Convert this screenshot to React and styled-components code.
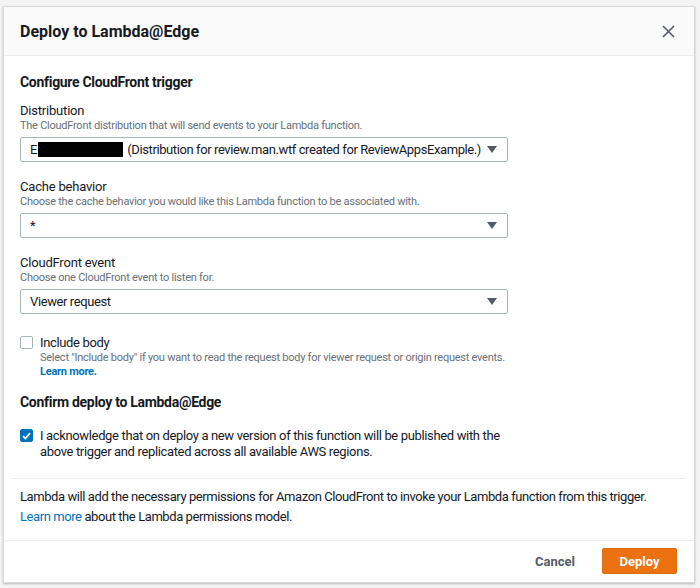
import React, { useState } from 'react';
import styled, { createGlobalStyle } from 'styled-components';

const GlobalStyle = createGlobalStyle`
  html, body {
    margin: 0;
    padding: 0;
    background: #f4f4f4;
    font-family: Roboto, "Liberation Sans", Arial, sans-serif;
    color: #16191f;
  }
`;

const Page = styled.div`
  width: 700px;
  height: 588px;
  padding: 6px 5px 0 3px;
  box-sizing: border-box;
`;

const Modal = styled.div`
  width: 692px;
  height: 577px;
  box-sizing: border-box;
  background: #fff;
  border: 1px solid #d5dbdb;
  box-shadow: 0 1px 2px rgba(0, 0, 0, 0.25);
  display: flex;
  flex-direction: column;
`;

const Header = styled.div`
  height: 48px;
  flex-shrink: 0;
  display: flex;
  align-items: center;
  justify-content: space-between;
  padding: 0 18px 0 16px;
  background: #fafafa;
  border-bottom: 1px solid #eaeded;
`;

const Title = styled.h2`
  margin: 0;
  font-size: 16px;
  font-weight: 700;
  color: #16191f;
`;

const CloseButton = styled.button`
  border: none;
  background: none;
  padding: 0;
  width: 16px;
  height: 16px;
  display: flex;
  align-items: center;
  justify-content: center;
  cursor: pointer;
  color: #545b64;
`;

const Body = styled.div`
  flex: 1;
  padding: 0 8px;
`;

const Content = styled.div`
  padding: 16px 8px 0 8px;
`;

const SectionTitle = styled.h3`
  margin: ${({ top }) => top || 0}px 0 0 0;
  font-size: 14px;
  line-height: 20px;
  font-weight: 700;
  letter-spacing: -0.3px;
`;

const Field = styled.div`
  margin-top: ${({ top }) => top}px;
  width: 488px;
`;

const Label = styled.div`
  font-size: 13px;
  line-height: 16px;
  letter-spacing: -0.2px;
  color: #16191f;
`;

const Description = styled.div`
  font-size: 11px;
  line-height: 14px;
  letter-spacing: -0.25px;
  color: #687078;
  white-space: nowrap;
`;

const Select = styled.div`
  margin-top: 4px;
  height: 25px;
  box-sizing: border-box;
  border: 1px solid #aab7b8;
  border-radius: 2px;
  display: flex;
  align-items: center;
  gap: 6px;
  padding: 0 10px 0 9px;
  font-size: 13px;
  letter-spacing: -0.4px;
  color: #16191f;
`;

const SelectValue = styled.span`
  flex: 1;
  white-space: nowrap;
  overflow: hidden;
  display: flex;
  align-items: center;
`;

const Redacted = styled.span`
  display: inline-block;
  width: 87px;
  height: 15px;
  background: #000;
  margin: 0 4px 0 1px;
`;

const Caret = styled.span`
  flex-shrink: 0;
  width: 0;
  height: 0;
  border-left: 5px solid transparent;
  border-right: 5px solid transparent;
  border-top: 7px solid #545b64;
`;

const CheckRow = styled.label`
  margin-top: ${({ top }) => top}px;
  display: flex;
  gap: 7px;
  align-items: flex-start;
  cursor: pointer;
`;

const Box = styled.span`
  flex-shrink: 0;
  width: 13px;
  height: 13px;
  margin-top: 1px;
  box-sizing: border-box;
  border-radius: 2px;
  border: 1px solid ${({ checked }) => (checked ? '#0073bb' : '#aab7b8')};
  background: ${({ checked }) => (checked ? '#0073bb' : '#fff')};
  display: flex;
  align-items: center;
  justify-content: center;
`;

const CheckText = styled.div`
  font-size: 13px;
  line-height: 16px;
  letter-spacing: -0.35px;
`;

const Link = styled.a`
  color: #0073bb;
  text-decoration: none;
  font-weight: ${({ bold }) => (bold ? 700 : 400)};
`;

const Divider = styled.div`
  height: 1px;
  background: #eaeded;
  margin-top: 18px;
`;

const Note = styled.p`
  margin: 8px 0 0 0;
  padding: 0 8px;
  font-size: 13px;
  line-height: 20px;
  letter-spacing: -0.42px;
  white-space: nowrap;
`;

const Footer = styled.div`
  height: 40px;
  flex-shrink: 0;
  border-top: 1px solid #eaeded;
  display: flex;
  align-items: center;
  justify-content: flex-end;
  gap: 27px;
  padding: 0 17px 1px 0;
`;

const TextButton = styled.button`
  border: none;
  background: none;
  padding: 0;
  font-family: inherit;
  font-size: 13px;
  font-weight: 700;
  color: #545b64;
  cursor: pointer;
`;

const PrimaryButton = styled.button`
  width: 75px;
  height: 26px;
  border: 1px solid #dd6b10;
  border-radius: 2px;
  background: #ec7211;
  color: #fff;
  font-family: inherit;
  font-size: 13px;
  font-weight: 700;
  cursor: pointer;
`;

const Check = () => (
  <svg width="9" height="8" viewBox="0 0 9 8">
    <path d="M1 4.2 L3.4 6.5 L8 1.2" fill="none" stroke="#fff" strokeWidth="1.8" />
  </svg>
);

export default function App() {
  const [includeBody, setIncludeBody] = useState(false);
  const [ack, setAck] = useState(true);

  return (
    <>
      <GlobalStyle />
      <Page>
        <Modal>
          <Header>
            <Title>Deploy to Lambda@Edge</Title>
            <CloseButton aria-label="Close">
              <svg width="13" height="13" viewBox="0 0 13 13">
                <path d="M1 1 L12 12 M12 1 L1 12" stroke="#545b64" strokeWidth="1.6" fill="none" />
              </svg>
            </CloseButton>
          </Header>
          <Body>
            <Content>
              <SectionTitle>Configure CloudFront trigger</SectionTitle>

              <Field top={11}>
                <Label>Distribution</Label>
                <Description>The CloudFront distribution that will send events to your Lambda function.</Description>
                <Select>
                  <SelectValue>
                    E<Redacted />(Distribution for review.man.wtf created for ReviewAppsExample.)
                  </SelectValue>
                  <Caret />
                </Select>
              </Field>

              <Field top={17}>
                <Label>Cache behavior</Label>
                <Description>Choose the cache behavior you would like this Lambda function to be associated with.</Description>
                <Select>
                  <SelectValue>*</SelectValue>
                  <Caret />
                </Select>
              </Field>

              <Field top={17}>
                <Label>CloudFront event</Label>
                <Description>Choose one CloudFront event to listen for.</Description>
                <Select>
                  <SelectValue>Viewer request</SelectValue>
                  <Caret />
                </Select>
              </Field>

              <CheckRow top={21} onClick={() => setIncludeBody(!includeBody)}>
                <Box checked={includeBody}>{includeBody && <Check />}</Box>
                <div>
                  <CheckText>Include body</CheckText>
                  <Description>
                    Select "Include body" if you want to read the request body for viewer request or origin request events.
                  </Description>
                  <Description>
                    <Link href="#" bold>Learn more.</Link>
                  </Description>
                </div>
              </CheckRow>

              <SectionTitle top={13}>Confirm deploy to Lambda@Edge</SectionTitle>

              <CheckRow top={16} onClick={() => setAck(!ack)}>
                <Box checked={ack}>{ack && <Check />}</Box>
                <CheckText>
                  I acknowledge that on deploy a new version of this function will be published with the
                  <br />
                  above trigger and replicated across all available AWS regions.
                </CheckText>
              </CheckRow>
            </Content>
            <Divider />
            <Note>
              Lambda will add the necessary permissions for Amazon CloudFront to invoke your Lambda function from this trigger.
              <br />
              <Link href="#">Learn more</Link> about the Lambda permissions model.
            </Note>
          </Body>
          <Footer>
            <TextButton>Cancel</TextButton>
            <PrimaryButton>Deploy</PrimaryButton>
          </Footer>
        </Modal>
      </Page>
    </>
  );
}
